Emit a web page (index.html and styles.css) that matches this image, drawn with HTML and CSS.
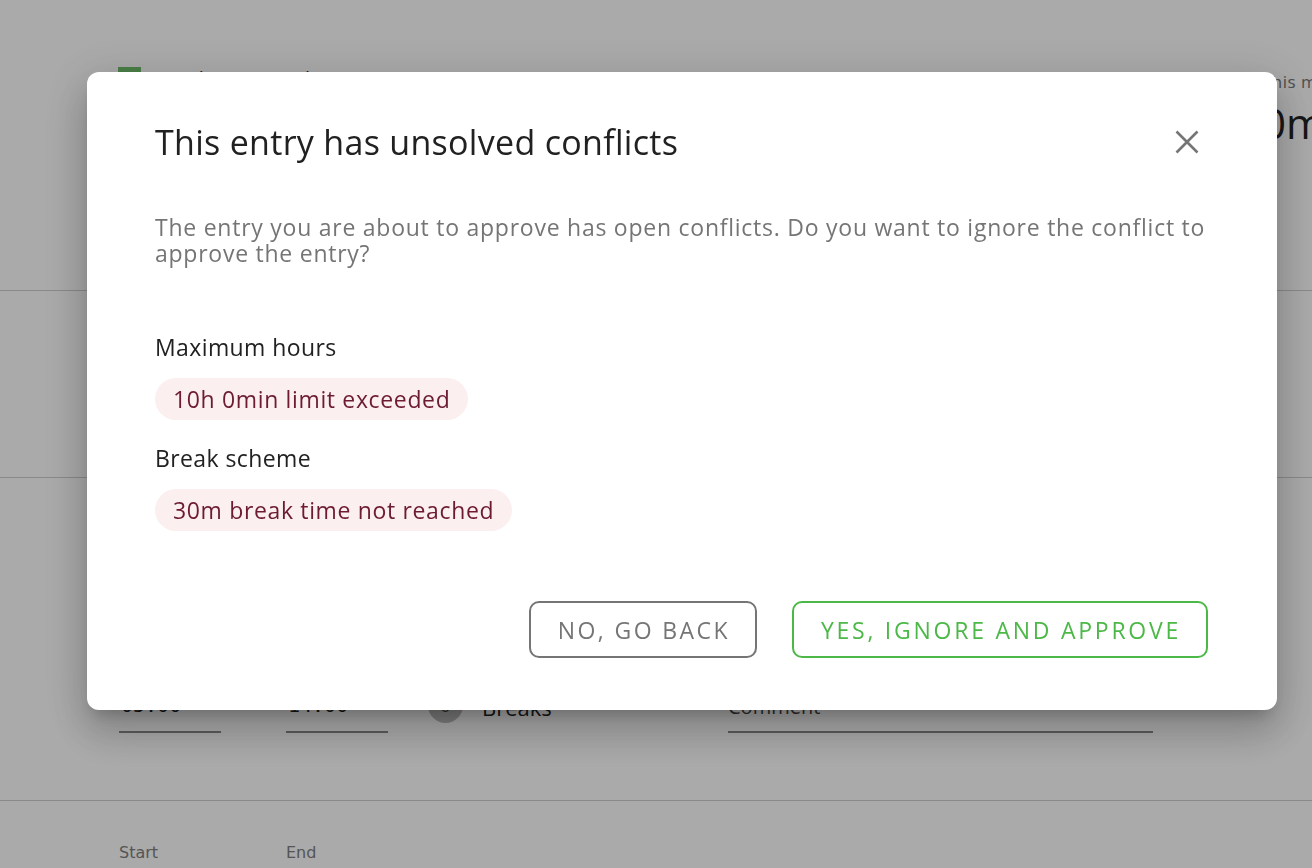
FILE: index.html
```html
<!DOCTYPE html>
<html lang="en">
<head>
<meta charset="utf-8">
<title>Conflicts</title>
<link rel="stylesheet" href="styles.css">
</head>
<body>
<div class="page">
  <section class="head">
    <div class="head-left">
      <span class="swatch"></span>
      <span class="head-title">Employee timesheet</span>
    </div>
    <div class="head-right">
      <span class="sum-label">This month</span>
      <span class="sum-value">0min</span>
    </div>
  </section>
  <section class="row row-b"></section>
  <section class="row row-c">
    <div class="labels"><span class="lab">Start</span><span class="lab">End</span></div>
    <div class="inputs">
      <span class="field time">05:00</span>
      <span class="dash">-</span>
      <span class="field time">14:00</span>
      <span class="count">0</span>
      <span class="breaks">Breaks</span>
      <span class="field comment">Comment</span>
    </div>
  </section>
  <section class="row row-d">
    <div class="labels"><span class="lab">Start</span><span class="lab">End</span></div>
  </section>
</div>

<div class="overlay">
  <div class="dialog" role="dialog">
    <div class="dialog-head">
      <h2 class="dialog-title">This entry has unsolved conflicts</h2>
      <button class="close" aria-label="Close">
        <svg width="24" height="24" viewBox="0 0 24 24"><path d="M1.5 1.5 L22.5 22.5 M22.5 1.5 L1.5 22.5" stroke="#757575" stroke-width="2.6" fill="none"/></svg>
      </button>
    </div>
    <p class="dialog-text">The entry you are about to approve has open conflicts. Do you want to ignore the conflict to approve the entry?</p>
    <div class="conflicts">
      <div class="conflict">
        <div class="conflict-name">Maximum hours</div>
        <span class="chip">10h 0min limit exceeded</span>
      </div>
      <div class="conflict">
        <div class="conflict-name">Break scheme</div>
        <span class="chip">30m break time not reached</span>
      </div>
    </div>
    <div class="actions">
      <button class="btn btn-back">NO, GO BACK</button>
      <button class="btn btn-approve">YES, IGNORE AND APPROVE</button>
    </div>
  </div>
</div>
</body>
</html>
```

FILE: styles.css
```css
html, body {
  margin: 0;
  padding: 0;
  height: 100%;
  overflow: hidden;
}
body {
  background: #ffffff;
  font-family: "Open Sans", "Noto Sans", sans-serif;
  color: #222;
}
.page {
  display: flex;
  flex-direction: column;
  width: 100%;
}
.head {
  height: 291px;
  border-bottom: 1px solid #cfcfcf;
  display: flex;
  justify-content: space-between;
  align-items: flex-start;
  box-sizing: border-box;
  padding: 65px 0 0 118px;
}
.head-left {
  display: flex;
  align-items: center;
  gap: 16px;
}
.swatch {
  width: 23px;
  height: 23px;
  background: #6fbf6c;
}
.head-title {
  font-size: 20px;
  color: #333;
}
.head-right {
  display: flex;
  flex-direction: column;
  width: 120px;
  margin-right: -70px;
  padding-top: 5px;
}
.sum-label {
  font-size: 17px;
  color: #757575;
  white-space: nowrap;
  letter-spacing: 0.5px;
}
.sum-value {
  font-size: 42px;
  line-height: 60px;
  color: #222;
  white-space: nowrap;
}
.row {
  border-bottom: 1px solid #cfcfcf;
  box-sizing: border-box;
  display: flex;
  flex-direction: column;
  justify-content: flex-end;
  padding-left: 119px;
}
.row-b { height: 187px; }
.row-c { height: 323px; padding-bottom: 67px; gap: 120px; }
.row-d { height: 120px; justify-content: flex-start; padding-top: 42px; border-bottom: none; }
.labels {
  display: flex;
}
.lab {
  width: 167px;
  font-size: 16px;
  line-height: 20px;
  color: #808080;
  font-family: "DejaVu Sans", sans-serif;
}
.inputs {
  display: flex;
  align-items: center;
  height: 44px;
}
.field {
  height: 44px;
  box-sizing: border-box;
  border-bottom: 2px solid #8a8a8a;
  display: flex;
  align-items: flex-start;
  padding-top: 4px;
  font-size: 20px;
  color: #222;
  font-family: "DejaVu Sans Mono", monospace;
}
.time { width: 102px; padding-left: 2px; }
.dash { width: 65px; text-align: center; color: #555; margin-top: -10px; }
.count {
  width: 35px;
  height: 35px;
  border-radius: 50%;
  background: #bdbdbd;
  margin-left: 40px;
  margin-top: -12px;
  display: flex;
  align-items: center;
  justify-content: center;
  color: #444;
  font-size: 18px;
}
.breaks {
  margin-left: 19px;
  margin-top: -8px;
  font-size: 22px;
  color: #222;
  width: 246px;
}
.comment {
  width: 425px;
  color: #444;
  font-family: "Open Sans", sans-serif;
}

.overlay {
  position: fixed;
  inset: 0;
  background: rgba(0, 0, 0, 0.335);
  display: flex;
  align-items: flex-start;
  padding: 72px 0 0 87px;
  box-sizing: border-box;
}
.dialog {
  width: 1190px;
  height: 638px;
  box-sizing: border-box;
  background: #fff;
  border-radius: 12px;
  padding: 47px 68px 52px 68px;
  display: flex;
  flex-direction: column;
  box-shadow: 0 11px 15px -7px rgba(0,0,0,.2), 0 24px 38px 3px rgba(0,0,0,.14), 0 9px 46px 8px rgba(0,0,0,.12);
}
.dialog-head {
  display: flex;
  justify-content: space-between;
  align-items: center;
}
.dialog-title {
  margin: 0;
  font-weight: 400;
  font-size: 34px;
  line-height: 46px;
  letter-spacing: 0.3px;
  color: #212121;
}
.close {
  border: none;
  background: none;
  padding: 0;
  margin-right: 10px;
  width: 24px;
  height: 24px;
  display: flex;
}
.dialog-text {
  margin: 49px 0 0;
  font-size: 23px;
  line-height: 26px;
  letter-spacing: 0.75px;
  color: #757575;
}
.conflicts {
  margin-top: 66px;
  display: flex;
  flex-direction: column;
  gap: 23px;
}
.conflict {
  display: flex;
  flex-direction: column;
  align-items: flex-start;
  gap: 16px;
}
.conflict-name {
  font-size: 23px;
  line-height: 30px;
  letter-spacing: 0.4px;
  color: #212121;
}
.chip {
  height: 42px;
  display: flex;
  align-items: center;
  padding: 0 18px;
  border-radius: 21px;
  background: #fbefef;
  color: #6d1b33;
  font-size: 23px;
  letter-spacing: 0.65px;
}
.actions {
  margin-top: auto;
  display: flex;
  justify-content: flex-end;
  gap: 35px;
  padding-right: 1px;
}
.btn {
  height: 57px;
  box-sizing: border-box;
  background: #fff;
  border: 2px solid #757575;
  border-radius: 10px;
  padding: 0 25px 0 27px;
  font-family: inherit;
  font-size: 23px;
  letter-spacing: 2.4px;
  color: #757575;
}
.btn-approve {
  border-color: #4cb847;
  color: #4cb847;
  letter-spacing: 2.75px;
}
```
